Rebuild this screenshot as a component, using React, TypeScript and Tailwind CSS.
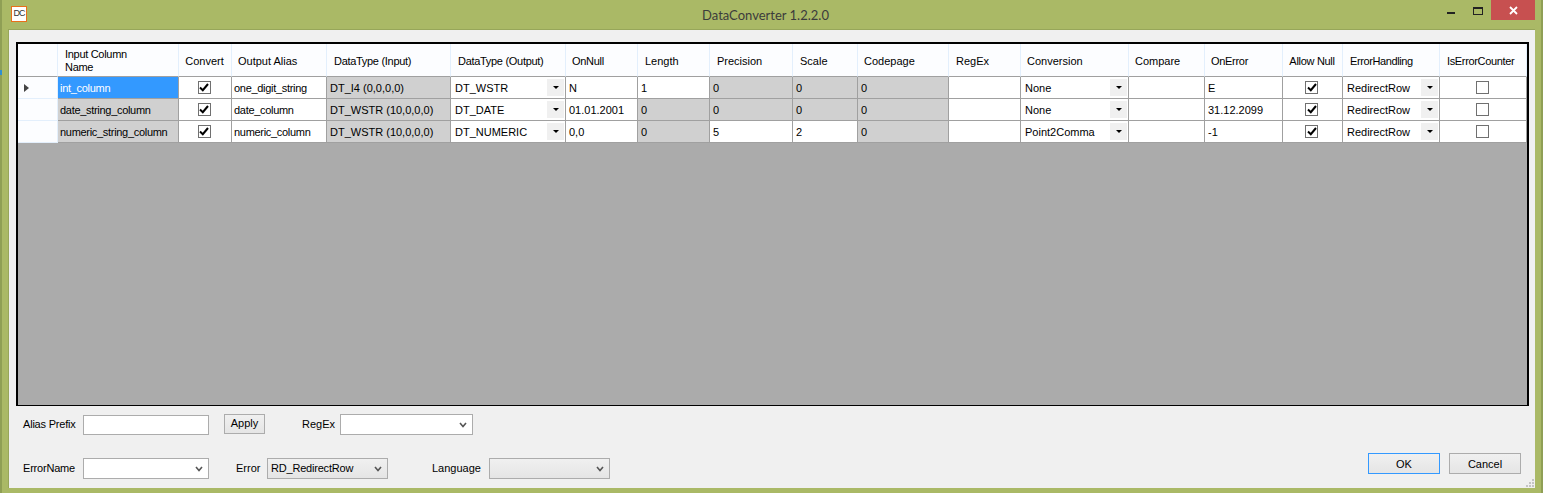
const columns = [
  { label: "", w: 40, pad: "" },
  { label: "Input Column\nName", w: 121, pad: "pl-[7px] tracking-[-0.3px] pb-[1px]" },
  { label: "Convert", w: 53, pad: "justify-center pr-[1px]" },
  { label: "Output Alias", w: 95, pad: "pl-[6px]" },
  { label: "DataType (Input)", w: 124, pad: "pl-[7px] tracking-[-0.3px]" },
  { label: "DataType (Output)", w: 115, pad: "pl-[7px] tracking-[-0.3px]" },
  { label: "OnNull", w: 72, pad: "pl-[6px] tracking-[-0.3px]" },
  { label: "Length", w: 72, pad: "pl-[7px]" },
  { label: "Precision", w: 83, pad: "pl-[7px]" },
  { label: "Scale", w: 65, pad: "pl-[7px]" },
  { label: "Codepage", w: 91, pad: "pl-[6px]" },
  { label: "RegEx", w: 72, pad: "pl-[7px]" },
  { label: "Conversion", w: 108, pad: "pl-[6px]" },
  { label: "Compare", w: 76, pad: "pl-[6px]" },
  { label: "OnError", w: 78, pad: "pl-[6px] tracking-[-0.3px]" },
  { label: "Allow Null", w: 60, pad: "justify-center pr-[1px] tracking-[-0.3px]" },
  { label: "ErrorHandling", w: 97, pad: "pl-[7px] tracking-[-0.4px]" },
  { label: "IsErrorCounter", w: 87, pad: "pl-[7px] tracking-[-0.35px]" },
];

type Cell =
  | { t: "text"; v: string; gray?: boolean; sel?: boolean }
  | { t: "check"; on: boolean }
  | { t: "combo"; v: string };

const txt = (v: string): Cell => ({ t: "text", v });
const gray = (v: string): Cell => ({ t: "text", v, gray: true });
const chk = (on: boolean): Cell => ({ t: "check", on });
const combo = (v: string): Cell => ({ t: "combo", v });

const rows: Cell[][] = [
  [
    { t: "text", v: "int_column", sel: true },
    chk(true), txt("one_digit_string"), gray("DT_I4 (0,0,0,0)"), combo("DT_WSTR"),
    txt("N"), txt("1"), gray("0"), gray("0"), gray("0"), txt(""),
    combo("None"), txt(""), txt("E"), chk(true), combo("RedirectRow"), chk(false),
  ],
  [
    gray("date_string_column"),
    chk(true), txt("date_column"), gray("DT_WSTR (10,0,0,0)"), combo("DT_DATE"),
    txt("01.01.2001"), gray("0"), gray("0"), gray("0"), gray("0"), txt(""),
    combo("None"), txt(""), txt("31.12.2099"), chk(true), combo("RedirectRow"), chk(false),
  ],
  [
    gray("numeric_string_column"),
    chk(true), txt("numeric_column"), gray("DT_WSTR (10,0,0,0)"), combo("DT_NUMERIC"),
    txt("0,0"), gray("0"), txt("5"), txt("2"), gray("0"), txt(""),
    combo("Point2Comma"), txt(""), txt("-1"), chk(true), combo("RedirectRow"), chk(false),
  ],
];

const gridCols = columns.map((c) => c.w + "px").join(" ");

function Check({ on }: { on: boolean }) {
  return (
    <span className="flex h-[13px] w-[13px] items-center justify-center border border-[#707070] bg-white">
      {on && (
        <svg width="10" height="9" viewBox="0 0 10 9">
          <path d="M1 4.5 L3.8 7.2 L9 1" fill="none" stroke="#000" strokeWidth="2" />
        </svg>
      )}
    </span>
  );
}

function GridCell({ cell }: { cell: Cell }) {
  const base = "h-[22px] border-r border-b border-[#a0a0a0] flex items-center overflow-hidden whitespace-nowrap";
  if (cell.t === "check") {
    return (
      <div className={base + " justify-center bg-white pr-[2px]"}>
        <Check on={cell.on} />
      </div>
    );
  }
  if (cell.t === "combo") {
    return (
      <div className={base + " justify-between bg-white pl-[2px] pr-[1px]"}>
        <span className="pl-[2px] pt-[1px]">{cell.v}</span>
        <span className="flex h-[17px] w-[17px] shrink-0 items-center justify-center bg-[#f0f0f0]">
          <span className="h-0 w-0 border-x-[3px] border-t-[3px] border-x-transparent border-t-black" />
        </span>
      </div>
    );
  }
  const color = cell.sel ? "bg-[#3399ff] text-white" : cell.gray ? "bg-[#d0d0d0]" : "bg-white";
  // the lower-case column names run a little narrower than Arial
  const tight = /_[a-z]/.test(cell.v) ? " pl-[2px] tracking-[-0.3px]" : " pl-[3px]";
  return <div className={base + " pt-[1px] " + tight + " " + color}>{cell.v}</div>;
}

function Combo({ value, width, disabled }: { value?: string; width: string; disabled?: boolean }) {
  return (
    <div
      className={
        width +
        " flex h-[21px] shrink-0 items-center justify-between border border-[#acacac] pl-[3px] pr-[5px] " +
        (disabled || value ? "bg-gradient-to-b from-[#f0f0f0] to-[#e5e5e5]" : "bg-white")
      }
    >
      <span className="tracking-[-0.2px]">{value}</span>
      <svg width="8" height="6" viewBox="0 0 8 6">
        <path d="M1 1 L4 4.5 L7 1" fill="none" stroke="#555" strokeWidth="1.6" />
      </svg>
    </div>
  );
}

function DialogButton({ label, primary, className }: { label: string; primary?: boolean; className: string }) {
  return (
    <div
      className={
        className +
        " flex shrink-0 items-center justify-center border bg-gradient-to-b from-[#f0f0f0] to-[#e5e5e5] " +
        (primary ? "border-[#3399ff]" : "border-[#acacac]")
      }
    >
      {label}
    </div>
  );
}

export default function App() {
  return (
    <div className="relative flex h-[493px] w-[1543px] flex-col border-x-2 border-x-[#8f9f55] bg-[#aab966] font-['Liberation_Sans',sans-serif] text-[11px] text-black">
      {/* Title bar */}
      <div className="flex h-[29px] shrink-0 items-start">
        <div className="ml-[9px] mt-[6px] flex h-[16px] w-[16px] items-center justify-center border border-[#e8701a] bg-white text-[9px] tracking-[-1px] text-[#333]">
          DC
        </div>
        <div className="flex-1 pl-[57px] pt-[6px] text-center font-['Lato',sans-serif] text-[13px] leading-[19px] text-[#3c3c3c]">
          DataConverter 1.2.2.0
        </div>
        <div className="flex items-start">
          <div className="mr-[18px] mt-[12px] h-[2px] w-[8px] bg-[#222]" />
          <div className="mr-[8px] mt-[7px] h-[8px] w-[10px] border border-t-2 border-[#222]" />
          <div className="flex h-[20px] w-[44px] items-center justify-center bg-[#c75050]">
            <svg width="9" height="9" viewBox="0 0 9 9">
              <path d="M1 1 L8 8 M8 1 L1 8" stroke="#fff" strokeWidth="1.8" />
            </svg>
          </div>
          <div className="w-[6px]" />
        </div>
      </div>

      {/* Client area */}
      <div className="relative mx-[6px] mb-[5px] flex flex-1 flex-col border-t border-l border-[#97a65a] bg-[#f0f0f0] pl-[7px] pt-[12px]">
        {/* Data grid */}
        <div className="h-[364px] w-[1513px] overflow-hidden border-x-2 border-t-2 border-b border-black bg-[#ababab]">
          <div className="grid" style={{ gridTemplateColumns: gridCols }}>
            {columns.map((c) => (
              <div
                key={c.label}
                className={
                  "flex h-[33px] items-center whitespace-pre-line border-r border-b border-r-[#e3effc] border-b-[#a0a0a0] bg-[#fcfdff] pt-[2px] leading-[13px] " +
                  c.pad
                }
              >
                {c.label}
              </div>
            ))}
            {rows.map((row, i) => (
              <div key={i} className="contents">
                <div className="flex h-[22px] items-center border-r border-b border-[#e3effc] bg-[#fcfdff] pl-[6px]">
                  {i === 0 && <span className="h-0 w-0 border-y-[4px] border-l-[5px] border-y-transparent border-l-[#444]" />}
                </div>
                {row.map((cell, j) => (
                  <GridCell key={j} cell={cell} />
                ))}
              </div>
            ))}
          </div>
        </div>

        {/* Bottom controls */}
        <div className="flex items-center pt-[8px]">
          <span className="ml-[7px] w-[60px] tracking-[-0.2px]">Alias Prefix</span>
          <div className="h-[20px] w-[126px] border border-[#acacac] bg-white" />
          <DialogButton label="Apply" className="ml-[15px] h-[20px] w-[41px] -translate-y-[1px]" />
          <span className="ml-[37px] w-[38px]">RegEx</span>
          <Combo width="w-[133px]" />
        </div>
        <div className="flex items-center pt-[23px]">
          <span className="ml-[7px] w-[60px] tracking-[-0.2px]">ErrorName</span>
          <Combo width="w-[126px]" />
          <span className="ml-[27px] w-[31px]">Error</span>
          <Combo width="w-[121px]" value="RD_RedirectRow" />
          <span className="ml-[44px] w-[57px]">Language</span>
          <Combo width="w-[121px]" disabled />
          <DialogButton label="OK" primary className="ml-[758px] h-[21px] w-[72px] -translate-y-[5px] pt-[1px]" />
          <DialogButton label="Cancel" className="ml-[9px] h-[21px] w-[72px] -translate-y-[5px] pt-[1px]" />
        </div>

        {/* Resize grip */}
        <svg className="absolute bottom-0 right-0" width="10" height="10" viewBox="0 0 10 10">
          <path d="M7 1h2v2H7zM4 4h2v2H4zM7 4h2v2H7zM1 7h2v2H1zM4 7h2v2H4zM7 7h2v2H7z" fill="#c4c4c4" />
        </svg>
      </div>

      {/* sliver of the window behind, showing at the left edge */}
      <div className="absolute -left-[2px] top-[70px] h-[5px] w-[2px] bg-[#2f8fd0]" />
    </div>
  );
}
